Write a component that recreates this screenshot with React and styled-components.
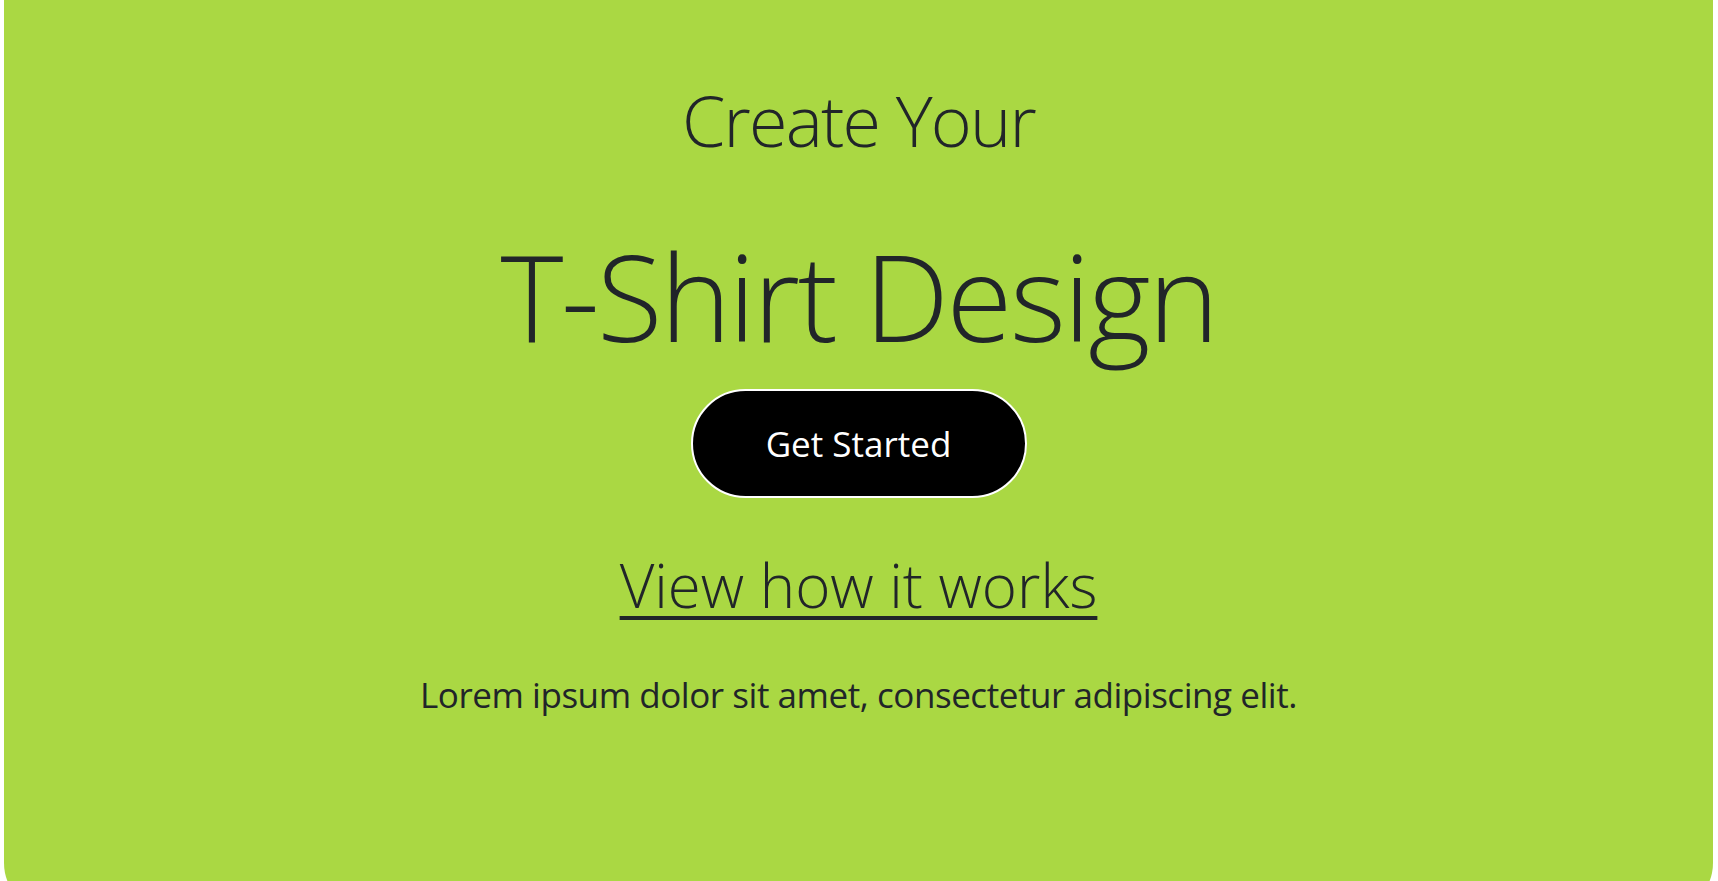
import React from 'react';
import styled, { createGlobalStyle } from 'styled-components';

const GlobalStyle = createGlobalStyle`
  html, body {
    margin: 0;
    padding: 0;
    background: #ffffff;
    overflow: hidden;
  }
  body {
    font-family: "Open Sans", "Noto Sans", "Liberation Sans", sans-serif;
    color: #212529;
  }
`

const App = () => {
  return (
    <>
      <GlobalStyle />
      <Hero>
        <Kicker>Create Your</Kicker>
        <Title>T-Shirt Design</Title>
        <StartButton type="button">Get Started</StartButton>
        <HowLink href="#">View how it works</HowLink>
        <Lead>Lorem ipsum dolor sit amet, consectetur adipiscing elit.</Lead>
      </Hero>
    </>
  );
};

export default App;

const Hero = styled.section`
  margin: 0 5px 0 4px;
  height: 913px;
  background: #aad843;
  border-radius: 0 0 50px 50px;
  display: flex;
  flex-direction: column;
  align-items: center;
  padding-top: 85px;
  box-sizing: border-box;
`

const Kicker = styled.h2`
  margin: 0;
  font-size: 70px;
  line-height: 1;
  font-weight: 300;
  letter-spacing: -1.8px;
`

const Title = styled.h1`
  margin: 81px 0 0;
  font-size: 120px;
  line-height: 1;
  font-weight: 300;
  letter-spacing: -2.4px;
`

const StartButton = styled.button`
  margin-top: 33px;
  width: 336px;
  height: 109px;
  border: 2px solid #ffffff;
  border-radius: 55px;
  background: #000000;
  color: #ffffff;
  font-family: "Open Sans", "Noto Sans", sans-serif;
  font-size: 35px;
  font-weight: 400;
  cursor: pointer;
`

const HowLink = styled.a`
  margin-top: 57px;
  font-size: 60px;
  line-height: 1;
  font-weight: 300;
  color: #212529;
  text-decoration: underline;
  text-decoration-thickness: 4px;
  text-underline-offset: 8px;
`

const Lead = styled.p`
  margin: 62px 0 0;
  font-size: 35px;
  line-height: 1;
  font-weight: 400;
  letter-spacing: -0.45px;
`
